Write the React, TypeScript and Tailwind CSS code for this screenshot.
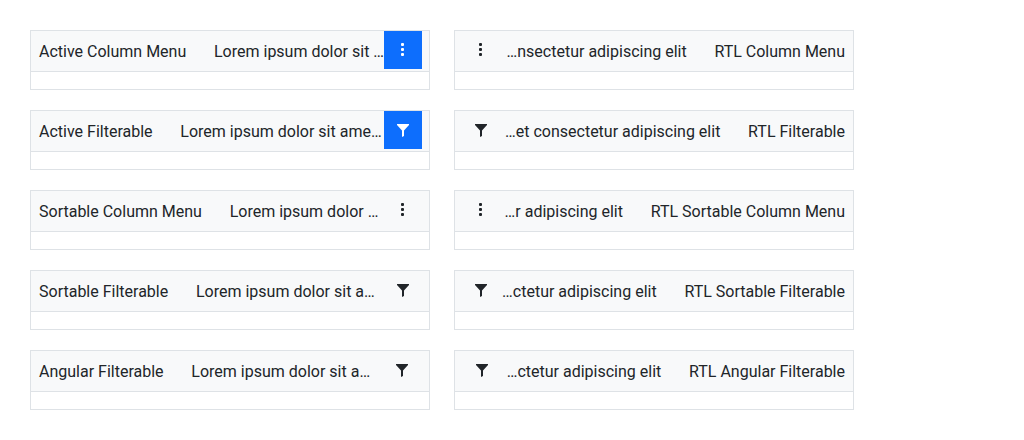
const rows = [
  { l: 'Active Column Menu', lx: 'Lorem ipsum dolor sit …', kind: 'menu', active: true, inset: false, r: 'RTL Column Menu', rx: '…nsectetur adipiscing elit' },
  { l: 'Active Filterable', lx: 'Lorem ipsum dolor sit ame…', kind: 'filter', active: true, inset: false, r: 'RTL Filterable', rx: '…et consectetur adipiscing elit' },
  { l: 'Sortable Column Menu', lx: 'Lorem ipsum dolor …', kind: 'menu', active: false, inset: false, r: 'RTL Sortable Column Menu', rx: '…r adipiscing elit' },
  { l: 'Sortable Filterable', lx: 'Lorem ipsum dolor sit a…', kind: 'filter', active: false, inset: false, r: 'RTL Sortable Filterable', rx: '…ctetur adipiscing elit' },
  { l: 'Angular Filterable', lx: 'Lorem ipsum dolor sit a…', kind: 'filter', active: false, inset: true, r: 'RTL Angular Filterable', rx: '…ctetur adipiscing elit' },
];

function IconButton({ kind, active = false }: { kind: string; active?: boolean }) {
  return (
    <span className={active ? 'flex size-[38px] shrink-0 items-center justify-center bg-[#0d6efd] text-white' : 'flex size-[38px] shrink-0 items-center justify-center'}>
      <svg className="size-4" viewBox="0 0 16 16" fill="currentColor">
        {kind === 'menu' ? (
          <>
            <rect x="6" y="1" width="3" height="3" rx="1" />
            <rect x="6" y="6" width="3" height="3" rx="1" />
            <rect x="6" y="11" width="3" height="3" rx="1" />
          </>
        ) : (
          <path d="M2 2h12v1L9 8.5V14l-2 1V8.5L2 3z" />
        )}
      </svg>
    </span>
  );
}

export default function App() {
  return (
    <div className="grid h-[440px] w-[1024px] grid-cols-[400px_400px] content-start gap-x-6 gap-y-5 bg-white p-[30px] font-['Roboto',sans-serif] text-base leading-6 text-[#212529]">
      {rows.flatMap((r) => [
        <div key={r.l} className="h-[60px] border border-[#dee2e6]">
          <div className={r.inset ? 'flex h-[41px] border-b border-[#dee2e6] bg-[#f8f9fa] pr-2 pl-2' : 'flex h-[41px] border-b border-[#dee2e6] bg-[#f8f9fa] pr-[7px] pl-2'}>
            <span className="shrink-0 pt-[9px] whitespace-nowrap">{r.l}</span>
            <span className="ml-[27.75px] min-w-0 flex-1 pt-[9px] whitespace-nowrap">{r.lx}</span>
            <IconButton kind={r.kind} active={r.active} />
          </div>
        </div>,
        <div key={r.r} className="h-[60px] border border-[#dee2e6]">
          <div className={r.inset ? 'flex h-[41px] border-b border-[#dee2e6] bg-[#f8f9fa] pr-2 pl-2' : 'flex h-[41px] border-b border-[#dee2e6] bg-[#f8f9fa] pr-2 pl-[7px]'}>
            <IconButton kind={r.kind} />
            <span className="min-w-0 flex-1 pt-[9px] text-right whitespace-nowrap">{r.rx}</span>
            <span className="ml-[27.75px] shrink-0 pt-[9px] whitespace-nowrap">{r.r}</span>
          </div>
        </div>,
      ])}
    </div>
  );
}
